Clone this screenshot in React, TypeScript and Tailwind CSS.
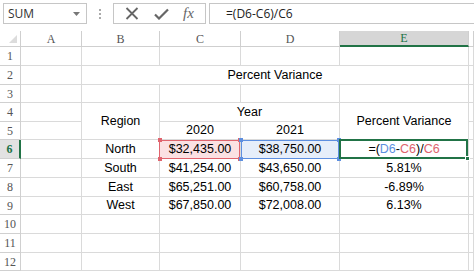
import React from "react";

const line = "border-r border-b border-[#dadada]";
const cell = `${line} flex items-center justify-center text-[12.5px] text-black leading-none whitespace-nowrap`;
const rowHead = "border-r border-b border-[#d0d0d0] flex items-center justify-center text-[12px] text-[#555] font-['Liberation_Serif',serif] leading-none";
const colHead = "border-r border-b border-[#cfcfcf] flex items-end justify-center pb-[1px] text-[12px] text-[#555] font-['Liberation_Serif',serif] leading-none";

function Corner({ color, pos }: { color: string; pos: string }) {
  return <span className={`absolute w-[4px] h-[4px] ${color} ${pos}`} />;
}

function Blank() {
  return <div className={line} />;
}

function Row({ n }: { n: number }) {
  return <div className={rowHead}>{n}</div>;
}

export default function App() {
  return (
    <div className="w-[474px] h-[271px] overflow-hidden bg-white font-['Liberation_Sans',Arial,sans-serif]">
      {/* FORMULA BAR */}
      <div className="h-[31px] flex items-start pt-[3px] pl-[3px]">
        <div className="w-[84px] h-[21px] border border-[#c6c6c6] flex items-center justify-between pl-[4px] pr-[6px]">
          <span className="text-[12px] text-[#333] font-['Open_Sans',sans-serif]">SUM</span>
          <svg width="7" height="4" viewBox="0 0 7 4">
            <path d="M0 0h7L3.5 4z" fill="#777" />
          </svg>
        </div>
        <div className="w-[26px] h-[21px] flex flex-col items-center justify-center gap-[2px]">
          <span className="w-[2px] h-[2px] bg-[#aaa]" />
          <span className="w-[2px] h-[2px] bg-[#aaa]" />
          <span className="w-[2px] h-[2px] bg-[#aaa]" />
        </div>
        <div className="w-[93px] h-[21px] border border-[#c6c6c6] flex items-center justify-around px-[4px]">
          <svg width="14" height="13" viewBox="0 0 14 13">
            <path d="M1.5 1l11 11M12.5 1l-11 11" stroke="#666" strokeWidth="1.8" />
          </svg>
          <svg width="15" height="12" viewBox="0 0 15 12">
            <path d="M1 6.5l4 4L14 1.5" stroke="#666" strokeWidth="2.2" fill="none" />
          </svg>
          <span className="text-[15px] italic text-[#666] font-['Liberation_Serif',serif] leading-none">fx</span>
        </div>
        <div className="flex-1 h-[21px] ml-[3px] border border-r-0 border-[#c6c6c6] flex items-center pl-[16px]">
          <span className="text-[12px] text-[#222] font-['Open_Sans',sans-serif]">=(D6-C6)/C6</span>
        </div>
      </div>

      {/* GRID */}
      <div className="grid grid-cols-[21px_61px_78px_81px_99px_129px_1fr] grid-rows-[16px_19px_19px_18px_19px_18px_19px_19px_19px_18px_19px_19px_18px]">
        {/* column headers */}
        <div className="border-r border-b border-[#cfcfcf] relative">
          <svg className="absolute right-[3px] bottom-[3px]" width="8" height="8" viewBox="0 0 8 8">
            <path d="M8 0v8H0z" fill="#dcdcdc" />
          </svg>
        </div>
        <div className={colHead}>A</div>
        <div className={colHead}>B</div>
        <div className={colHead}>C</div>
        <div className={colHead}>D</div>
        <div className="border-r border-[#cfcfcf] border-b-2 border-b-[#217346] bg-[#d6d6d6] flex items-end justify-center pb-[1px] text-[12px] text-[#217346] font-['Liberation_Serif',serif] leading-none">E</div>
        <div className={colHead} />

        {/* row 1 */}
        <Row n={1} />
        <Blank /><Blank /><Blank /><Blank /><Blank /><Blank />

        {/* row 2 */}
        <Row n={2} />
        <Blank />
        <div className={`${cell} col-span-4`}>Percent Variance</div>
        <Blank />

        {/* row 3 */}
        <Row n={3} />
        <Blank /><Blank /><Blank /><Blank /><Blank /><Blank />

        {/* row 4 */}
        <Row n={4} />
        <Blank />
        <div className={`${cell} row-span-2`}>Region</div>
        <div className={`${cell} col-span-2`}>Year</div>
        <div className={`${cell} row-span-2`}>Percent Variance</div>
        <Blank />

        {/* row 5 */}
        <Row n={5} />
        <Blank />
        <div className={cell}>2020</div>
        <div className={cell}>2021</div>
        <Blank />

        {/* row 6 */}
        <div className="border-b border-[#d0d0d0] border-r-2 border-r-[#217346] bg-[#e2e2e2] flex items-center justify-center text-[12px] font-bold text-[#217346] font-['Liberation_Serif',serif] leading-none">6</div>
        <Blank />
        <div className={cell}>North</div>
        <div className={`${cell} relative bg-[#fbe1e3]`}>
          <div className="absolute inset-x-0 top-0 bottom-[-1px] left-[-1px] border border-[#e0646e]" />
          <Corner color="bg-[#e0646e]" pos="left-[-2px] top-[-2px]" />
          <Corner color="bg-[#e0646e]" pos="right-[-2px] top-[-2px]" />
          <Corner color="bg-[#e0646e]" pos="left-[-2px] bottom-[-3px]" />
          <Corner color="bg-[#e0646e]" pos="right-[-2px] bottom-[-3px]" />
          <span className="relative">$32,435.00</span>
        </div>
        <div className={`${cell} relative bg-[#e6eefa]`}>
          <div className="absolute inset-x-0 top-0 bottom-[-1px] border border-[#5d8fe0]" />
          <Corner color="bg-[#5d8fe0]" pos="left-[-2px] top-[-2px]" />
          <Corner color="bg-[#5d8fe0]" pos="right-[-2px] top-[-2px]" />
          <Corner color="bg-[#5d8fe0]" pos="left-[-2px] bottom-[-3px]" />
          <Corner color="bg-[#5d8fe0]" pos="right-[-2px] bottom-[-3px]" />
          <span className="relative">$38,750.00</span>
        </div>
        <div className={`${cell} relative`}>
          <div className="absolute left-[-1px] right-0 top-[-1px] bottom-[-1px] border-2 border-[#217346]" />
          <span className="absolute right-[-2px] bottom-[-3px] w-[5px] h-[5px] bg-[#217346] border border-white" />
          <span className="relative">
            =(<span className="text-[#5d8fe0]">D6</span>-<span className="text-[#e0646e]">C6</span>)/<span className="text-[#e0646e]">C6</span>
          </span>
        </div>
        <Blank />

        {/* row 7 */}
        <Row n={7} />
        <Blank />
        <div className={cell}>South</div>
        <div className={cell}>$41,254.00</div>
        <div className={cell}>$43,650.00</div>
        <div className={cell}>5.81%</div>
        <Blank />

        {/* row 8 */}
        <Row n={8} />
        <Blank />
        <div className={cell}>East</div>
        <div className={cell}>$65,251.00</div>
        <div className={cell}>$60,758.00</div>
        <div className={cell}>-6.89%</div>
        <Blank />

        {/* row 9 */}
        <Row n={9} />
        <Blank />
        <div className={cell}>West</div>
        <div className={cell}>$67,850.00</div>
        <div className={cell}>$72,008.00</div>
        <div className={cell}>6.13%</div>
        <Blank />

        {/* rows 10-12 */}
        <Row n={10} />
        <Blank /><Blank /><Blank /><Blank /><Blank /><Blank />
        <Row n={11} />
        <Blank /><Blank /><Blank /><Blank /><Blank /><Blank />
        <Row n={12} />
        <Blank /><Blank /><Blank /><Blank /><Blank /><Blank />
      </div>
    </div>
  );
}
